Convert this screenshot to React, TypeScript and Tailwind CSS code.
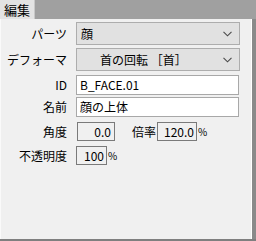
import React from "react";

const Chevron = () => (
  <svg width="9" height="6" viewBox="0 0 9 6" className="shrink-0">
    <path d="M0.5 0.8 L4.5 4.8 L8.5 0.8" fill="none" stroke="#4a4a4a" strokeWidth="1.1" />
  </svg>
);

const Label = ({ children }: { children: React.ReactNode }) => (
  <div className="w-[67px] shrink-0 text-right pr-[1px] whitespace-nowrap">{children}</div>
);

export default function App() {
  return (
    <div
      className="w-[256px] h-[241px] bg-[#a0a0a0] flex flex-col overflow-hidden text-[12px] leading-none text-black"
      style={{ fontFamily: '"Noto Sans CJK JP", "Noto Sans", sans-serif' }}
    >
      <div className="h-[19px] flex shrink-0">
        <div className="w-[35px] bg-[#e3e3e3] flex items-center justify-center text-[13px] border-r border-[#c8c8c8]">
          編集
        </div>
      </div>
      <div className="flex flex-1 min-h-0">
        <div className="flex-1 bg-[#f0f0f0] border-l border-[#fafafa] border-r border-r-white flex flex-col pt-[3px]">
          <div className="flex items-center h-[23px]">
            <Label>パーツ</Label>
            <div className="ml-[8px] w-[164px] h-[23px] bg-[#e1e1e1] border border-[#adadad] flex items-center pl-[4px] pr-[7px]">
              <span className="flex-1">顔</span>
              <Chevron />
            </div>
          </div>
          <div className="flex items-center h-[23px] mt-[3px]">
            <Label>デフォーマ</Label>
            <div className="ml-[8px] w-[164px] h-[23px] bg-[#e1e1e1] border border-[#adadad] flex items-center pl-[23px] pr-[7px]">
              <span className="flex-1 whitespace-nowrap">首の回転 ［首］</span>
              <Chevron />
            </div>
          </div>
          <div className="flex items-center h-[20px] mt-[4px]">
            <Label>ID</Label>
            <div className="ml-[8px] w-[163px] h-[20px] bg-white border border-[#a8a8a8] flex items-center pl-[3px]">
              B_FACE.01
            </div>
          </div>
          <div className="flex items-center h-[20px] mt-[2px]">
            <Label>名前</Label>
            <div className="ml-[8px] w-[163px] h-[20px] bg-white border border-[#a8a8a8] flex items-center pl-[3px]">
              顔の上体
            </div>
          </div>
          <div className="flex items-center h-[19px] mt-[5px]">
            <Label>角度</Label>
            <div className="ml-[9px] w-[38px] h-[19px] border border-[#7a7a7a] flex items-center justify-end pr-[3px]">
              0.0
            </div>
            <div className="ml-[17px] w-[24px] shrink-0 whitespace-nowrap">倍率</div>
            <div className="ml-[1px] w-[40px] h-[19px] border border-[#7a7a7a] flex items-center justify-end pr-[2px]">
              120.0
            </div>
            <span className="ml-[1px] text-[10px]">%</span>
          </div>
          <div className="flex items-center h-[19px] mt-[5px]">
            <Label>不透明度</Label>
            <div className="ml-[8px] w-[31px] h-[19px] border border-[#7a7a7a] flex items-center justify-end pr-[2px]">
              100
            </div>
            <span className="ml-[1px] text-[10px]">%</span>
          </div>
        </div>
        <div className="w-[4px] bg-[#8a8a8a]" />
      </div>
      <div className="h-[2px] bg-[#7f7f7f] shrink-0" />
    </div>
  );
}
